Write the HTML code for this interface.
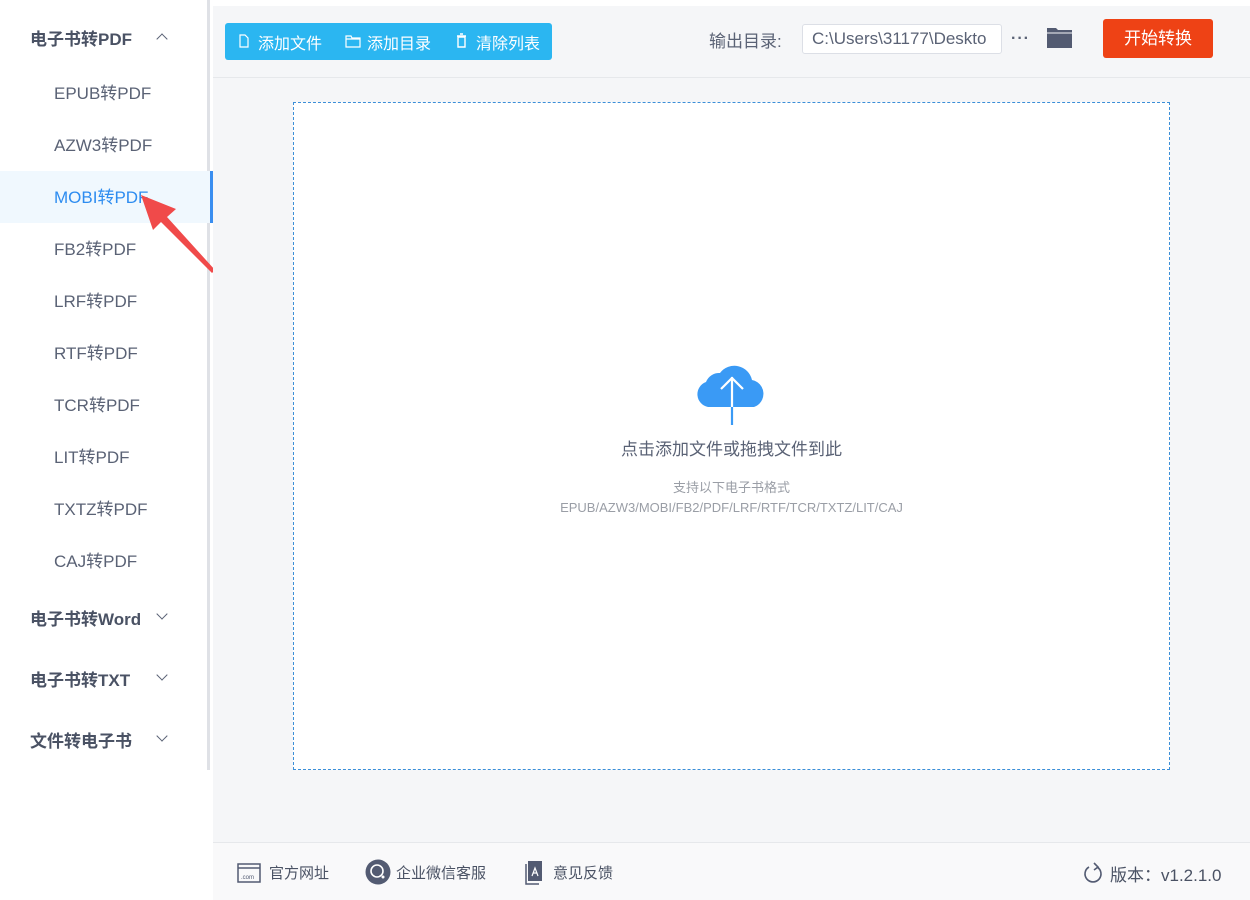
<!DOCTYPE html>
<html><head><meta charset="utf-8"><style>
*{margin:0;padding:0;box-sizing:border-box}
body{width:1250px;height:900px;background:#fff;font-family:"Liberation Sans","Noto Sans CJK SC",sans-serif;position:relative;overflow:hidden;color:#505a6e}
.side{position:absolute;left:0;top:0;width:210px;height:770px;background:#fff;border-right:3px solid #dfe1e6}
.grp{position:absolute;left:30px;font-size:17px;font-weight:bold;color:#4a5264}
.chev{position:absolute;left:158px;width:8px;height:8px;border-right:1.5px solid #5a6275;border-bottom:1.5px solid #5a6275}
.it{position:absolute;left:54px;font-size:17px;color:#5a6275}
.act{position:absolute;left:0;top:171px;width:213px;height:52px;background:#f0f8fe;border-right:3px solid #3a8ef0}
.main{position:absolute;left:213px;top:6px;width:1037px;height:836px;background:#f5f6f8}
.tb{position:absolute;left:213px;top:77px;width:1037px;height:1px;background:#e6e8eb}
.btns{position:absolute;left:225px;top:23px;width:327px;height:37px;background:#2bb6f1;border-radius:3px;color:#fff;font-size:16px}
.btns span{position:absolute;top:7px}
.drop{position:absolute;left:293px;top:102px;width:877px;height:668px;background:#fff;border:1px dashed #3c8fd8}
.foot{position:absolute;left:213px;top:842px;width:1037px;height:58px;background:#f9f9fa;border-top:1px solid #e6e8eb;font-size:15px;color:#4a5264}
.foot span{position:absolute;top:19px}
</style></head><body>
<div class="side"></div>
<div class="act"></div>
<div class="grp" style="top:25px">电子书转PDF</div>
<div class="chev" style="top:35px;transform:rotate(-135deg)"></div>
<div class="it" style="top:79px">EPUB转PDF</div>
<div class="it" style="top:131px">AZW3转PDF</div>
<div class="it" style="top:183px;color:#2d8cf0">MOBI转PDF</div>
<div class="it" style="top:235px">FB2转PDF</div>
<div class="it" style="top:287px">LRF转PDF</div>
<div class="it" style="top:339px">RTF转PDF</div>
<div class="it" style="top:391px">TCR转PDF</div>
<div class="it" style="top:443px">LIT转PDF</div>
<div class="it" style="top:495px">TXTZ转PDF</div>
<div class="it" style="top:547px">CAJ转PDF</div>
<div class="grp" style="top:605px">电子书转Word</div>
<div class="chev" style="top:610px;transform:rotate(45deg)"></div>
<div class="grp" style="top:666px">电子书转TXT</div>
<div class="chev" style="top:671px;transform:rotate(45deg)"></div>
<div class="grp" style="top:727px">文件转电子书</div>
<div class="chev" style="top:732px;transform:rotate(45deg)"></div>
<svg style="position:absolute;left:135px;top:190px" width="85" height="85"><path d="M80 80 L32 27 L41 19 L6 5 L18 40 L26 32 L77 83Z" fill="#f04a4a"/></svg>

<div class="main"></div>
<div class="tb"></div>
<div class="btns">
<svg style="position:absolute;left:14px;top:11px" width="10" height="14"><path d="M1 1H6L9 4V13H1Z" fill="none" stroke="#fff" stroke-width="1.2"/></svg>
<span style="left:33px">添加文件</span>
<svg style="position:absolute;left:120px;top:11px" width="16" height="14"><path d="M1 2H6L7 4H15V13H1Z M1 5H15" fill="none" stroke="#fff" stroke-width="1.2"/></svg>
<span style="left:142px">添加目录</span>
<svg style="position:absolute;left:231px;top:10px" width="11" height="15"><path d="M1 3H10M4 1H7M2 4H9V14H2Z" fill="none" stroke="#fff" stroke-width="1.4"/></svg>
<span style="left:251px">清除列表</span>
</div>
<div style="position:absolute;left:709px;top:27px;font-size:17px;color:#5a6275">输出目录:</div>
<div style="position:absolute;left:802px;top:24px;width:200px;height:30px;background:#fff;border:1px solid #dcdfe6;border-radius:3px;font-size:17px;padding:4px 9px;color:#5a6275;overflow:hidden;white-space:nowrap">C:\Users\31177\Deskto</div>
<div style="position:absolute;left:1011px;top:30px;font-size:16px;font-weight:bold;color:#5a6275;letter-spacing:1px">···</div>
<svg style="position:absolute;left:1047px;top:26px" width="25" height="22"><path d="M0 2H9L11 4H25V22H0Z" fill="#535b72"/><path d="M0 7H25" stroke="#f5f6f8" stroke-width="1"/></svg>
<div style="position:absolute;left:1103px;top:19px;width:110px;height:39px;background:#ee4215;border-radius:3px;color:#fff;font-size:17px;text-align:center;line-height:39px">开始转换</div>

<div class="drop"></div>
<svg style="position:absolute;left:694px;top:360px" width="76" height="66"><path d="M14 47 A13 13 0 0 1 12 22 A14 14 0 0 1 26 13 A18 18 0 0 1 58 20 A14 14 0 0 1 60 47Z" fill="#3a9af5"/><path d="M38 65V17M27 29L38 18L49 29" stroke="#fff" stroke-width="2.2" fill="none"/><path d="M38 47V65" stroke="#3a9af5" stroke-width="2.2"/></svg>
<div style="position:absolute;left:293px;width:877px;top:435px;text-align:center;font-size:17px;color:#5a6275">点击添加文件或拖拽文件到此</div>
<div style="position:absolute;left:293px;width:877px;top:478px;text-align:center;font-size:13px;color:#9a9ea6;line-height:20px">支持以下电子书格式<br>EPUB/AZW3/MOBI/FB2/PDF/LRF/RTF/TCR/TXTZ/LIT/CAJ</div>

<div class="foot">
<svg style="position:absolute;left:24px;top:20px" width="24" height="20"><rect x="1" y="1" width="22" height="18" fill="none" stroke="#535b72" stroke-width="1.5"/><path d="M1 5H23" stroke="#535b72" stroke-width="1.5"/><text x="4" y="16" font-size="6" fill="#535b72" font-family="Liberation Sans">.com</text></svg>
<span style="left:56px">官方网址</span>
<svg style="position:absolute;left:152px;top:16px" width="26" height="26"><circle cx="13" cy="13" r="12.5" fill="#535b72"/><circle cx="12" cy="12" r="6" fill="none" stroke="#fff" stroke-width="1.6"/><circle cx="18" cy="18" r="1.5" fill="#fff"/></svg>
<span style="left:183px">企业微信客服</span>
<svg style="position:absolute;left:312px;top:18px" width="18" height="24"><path d="M3 0H17V20H3Z" fill="#535b72"/><path d="M1 3V23H14" stroke="#535b72" fill="none" stroke-width="1.5"/><path d="M7 15L10 7L13 15M8 12H12" stroke="#fff" fill="none" stroke-width="1.2"/></svg>
<span style="left:340px">意见反馈</span>
<svg style="position:absolute;left:870px;top:19px" width="20" height="22"><path d="M14 5A8 8 0 1 1 6 5" fill="none" stroke="#535b72" stroke-width="1.6"/><path d="M11 1L15 5L11 8" fill="none" stroke="#535b72" stroke-width="1.6"/></svg>
<span style="left:897px;font-size:17px;top:18px">版本：v1.2.1.0</span>
</div>
</body></html>
